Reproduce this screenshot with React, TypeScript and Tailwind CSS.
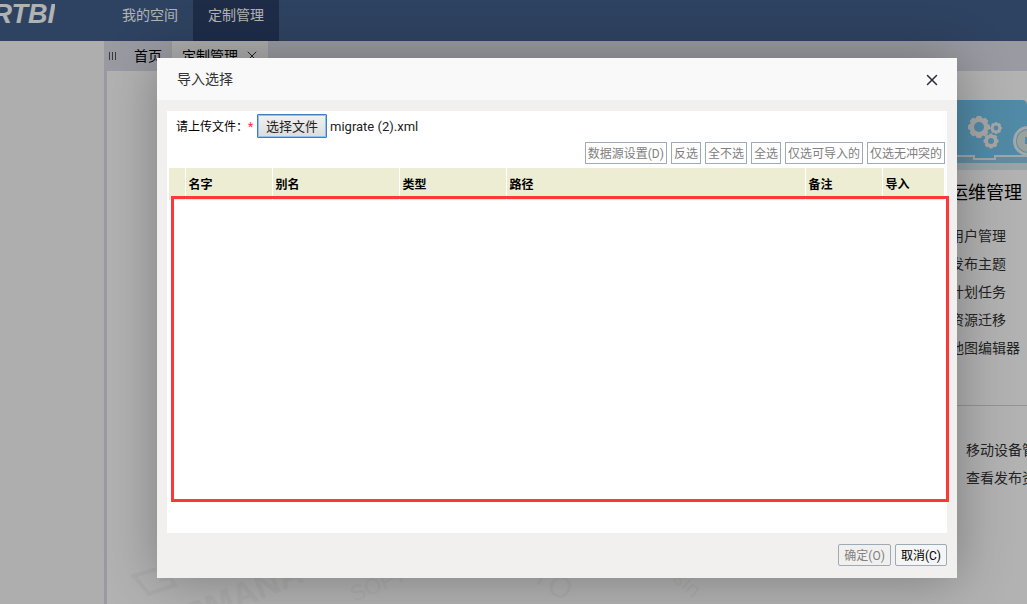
import { X } from "lucide-react";
import { useRef, useState } from "react";

const navItems = ["我的空间", "定制管理"];

const opsLinks = ["用户管理", "发布主题", "计划任务", "资源迁移", "地图编辑器"];
const extraLinks = ["移动设备管理", "查看发布资源"];

const bulkActions = ["数据源设置(D)", "反选", "全不选", "全选", "仅选可导入的", "仅选无冲突的"];

const columns = [
  { label: "", width: "w-4" },
  { label: "名字", width: "w-[87px]" },
  { label: "别名", width: "w-[127px]" },
  { label: "类型", width: "w-[107px]" },
  { label: "路径", width: "w-auto" },
  { label: "备注", width: "w-[77px]" },
  { label: "导入", width: "w-[62px]" }
];

function Gear({ cx, cy, r, hole }: { cx: number; cy: number; r: number; hole: number }) {
  return (
    <g transform={`translate(${cx} ${cy})`}>
      {[0, 45, 90, 135].map((angle) => (
        <rect key={angle} x={-r * 0.26} y={-r} width={r * 0.52} height={r * 2} rx={1.5} transform={`rotate(${angle})`} fill="#f0f0f0" />
      ))}
      <circle r={r * 0.86} fill="#f0f0f0" />
      <circle r={hole} fill="#75c6ee" />
    </g>
  );
}

function OpsBanner() {
  return (
    <svg className="block h-[70px] w-full" viewBox="0 0 77 70" preserveAspectRatio="xMaxYMin slice" aria-hidden="true">
      <rect y="50" width="77" height="20" fill="#dcebf2" />
      <path d="M0 0H72Q77 0 77 5V61H0Z" fill="#75c6ee" />
      <path d="M0 57H24V60H45V57H77V63H0Z" fill="#8ccbe9" />
      <Gear cx={29} cy={27} r={11} hole={5} />
      <Gear cx={46} cy={28} r={6} hole={2.4} />
      <Gear cx={41} cy={41} r={7.5} hole={3} />
      <path d="M0 56H24V59H45V56H77" fill="none" stroke="#e6eef3" strokeWidth="2" />
      <circle cx="78" cy="41" r="15" fill="#e8eff2" />
      <circle cx="78" cy="41" r="12" fill="#8fc7d8" />
      <circle cx="78" cy="41" r="11" fill="#dce9e6" />
      <path d="M75 37H77V44H75Z" fill="#75c6ee" />
    </svg>
  );
}

function Watermark() {
  return (
    <svg className="absolute bottom-0 left-0 h-12 w-[700px]" viewBox="0 0 700 48" fill="#f7f7f7" fontFamily="Liberation Sans" aria-hidden="true">
      <path d="M27 20 56 11 68 29 42 38Z" fill="none" stroke="#f7f7f7" strokeWidth="4" />
      <path d="M52 25 100 10M24 20 50 14" fill="none" stroke="#f7f7f7" strokeWidth="3" />
      <text x="83" y="72" fontSize="34" fontWeight="bold" transform="rotate(-22 83 72)">SMANA</text>
      <text x="247" y="46" fontSize="22" transform="rotate(-22 247 46)">SOFT</text>
      <text x="423" y="24" fontSize="30" transform="rotate(32 423 24)">TO</text>
      <text x="565" y="24" fontSize="22" transform="rotate(42 565 24)">sin</text>
    </svg>
  );
}

function Workspace() {
  return (
    <div className="flex h-full flex-col">
      <header className="flex h-[41px] shrink-0 bg-[#43618c]">
        <div className="flex w-[55px] justify-end overflow-hidden font-['Liberation_Sans'] text-[27px] leading-7 font-bold text-white italic">RTBI</div>
        <nav className="ml-[52px] flex">
          {navItems.map((item) => (
            <a key={item} href="#" className={`px-[15px] text-sm leading-[30px] text-white ${item === "定制管理" ? "bg-[#2c4067]" : ""}`}>
              {item}
            </a>
          ))}
        </nav>
      </header>
      <div className="flex min-h-0 flex-1">
        <aside className="w-[104px] shrink-0 bg-[#fafafa]" />
        <div className="flex min-w-0 flex-1 flex-col border-l-[3px] border-[#dddfe8]">
          <div className="flex h-[30px] shrink-0 items-center bg-[#dddfe8] text-sm text-black">
            <svg className="ml-0.5 h-2 w-2" viewBox="0 0 8 8" aria-hidden="true">
              <path d="M0.5 0V8M3.5 0V8M6.5 0V8" stroke="#555" />
            </svg>
            <a href="#" className="ml-[17px]">首页</a>
            <div className="ml-2.5 flex h-full items-center bg-[#f8f8f8] pr-2 pl-2.5">
              <a href="#">定制管理</a>
              <button type="button" aria-label="关闭定制管理" className="ml-1.5">
                <X size={16} strokeWidth={1.5} className="text-[#333]" />
              </button>
            </div>
          </div>
          <main className="relative flex flex-1 justify-end overflow-hidden bg-white">
            <Watermark />
            <section className="w-[77px] pt-[29px]">
              <OpsBanner />
              <h2 className="mt-[9px] text-lg whitespace-nowrap text-black">运维管理</h2>
              <ul className="mt-[15px] text-sm leading-7 whitespace-nowrap text-[#333]">
                {opsLinks.map((link) => (
                  <li key={link}><a href="#">{link}</a></li>
                ))}
              </ul>
              <ul className="mt-[43px] border-t border-[#d5d5d5] pt-[30px] pl-4 text-sm leading-7 whitespace-nowrap text-[#333]">
                {extraLinks.map((link) => (
                  <li key={link}><a href="#">{link}</a></li>
                ))}
              </ul>
            </section>
          </main>
        </div>
      </div>
    </div>
  );
}

function ImportDialog() {
  const fileRef = useRef<HTMLInputElement>(null);
  const [fileName, setFileName] = useState("migrate (2).xml");

  return (
    <div
      role="dialog"
      aria-labelledby="import-title"
      className="absolute top-[58px] left-[157px] flex w-[800px] flex-col bg-[#f1f0ee] shadow-[1px_1px_50px_rgba(0,0,0,0.3)]"
    >
      <div className="flex h-[42px] items-center justify-between bg-[#f9f9f9] pr-4 pl-5">
        <h1 id="import-title" className="text-sm text-[#333]">导入选择</h1>
        <button type="button" aria-label="关闭" className="pt-0.5">
          <X size={18} strokeWidth={2} className="text-[#2e2d3c]" />
        </button>
      </div>
      <div className="relative mx-2.5 mt-[11px] h-[422px] bg-white px-0.5 pt-[3px]">
        <div className="flex h-6 items-center pl-[7px]">
          <label htmlFor="import-file" className="pt-0.5 text-xs text-black">请上传文件：</label>
          <span className="w-[9px] pt-0.5 text-xs text-red-500">*</span>
          <input
            ref={fileRef}
            id="import-file"
            type="file"
            accept=".xml"
            className="hidden"
            onChange={(event) => setFileName(event.target.files?.[0]?.name ?? fileName)}
          />
          <button
            type="button"
            onClick={() => fileRef.current?.click()}
            className="h-6 w-[70px] rounded-[1px] border border-[#3d7fc0] bg-linear-to-b from-[#f2f2f2] to-[#dcdcdc] pt-px text-[13px] leading-5 text-[#222] ring-1 ring-[#8fc0f0] ring-inset"
          >
            选择文件
          </button>
          <span className="ml-[3px] pt-0.5 text-[13px] text-[#222]">{fileName}</span>
        </div>
        <div className="mt-1 flex h-[22px] justify-end gap-1">
          {bulkActions.map((action) => (
            <button key={action} type="button" disabled className="border border-[#9cabb8] px-0.5 pt-0.5 text-xs text-[#808080]">
              {action}
            </button>
          ))}
        </div>
        <table className="mt-1 w-[775px] table-fixed border-collapse bg-[#ededd3]">
          <thead>
            <tr className="h-8">
              {columns.map((column) => (
                <th key={column.label} scope="col" className={`border-r border-white pt-0.5 pl-[3px] text-left text-xs font-bold text-black last:border-r-0 ${column.width}`}>
                  {column.label}
                </th>
              ))}
            </tr>
          </thead>
        </table>
        <div className="absolute top-[85px] left-1 h-[306px] w-[778px] border-[3px] border-[#fd3838]" />
      </div>
      <div className="flex h-[45px] items-center justify-end gap-1 pr-2.5 pb-px">
        <button type="button" disabled className="h-[22px] rounded-xs border border-[#9cabb8] px-[5px] pt-px text-xs text-[#808080]">确定(O)</button>
        <button type="button" className="h-[22px] rounded-xs border border-[#9cabb8] bg-[#f5f5f5] px-[5px] pt-px text-xs text-black">取消(C)</button>
      </div>
    </div>
  );
}

export default function App() {
  return (
    <div className="relative h-screen overflow-hidden font-[Roboto,'Noto_Sans_CJK_SC',sans-serif]">
      <Workspace />
      <div className="absolute inset-0 bg-black/30" />
      <ImportDialog />
    </div>
  );
}
